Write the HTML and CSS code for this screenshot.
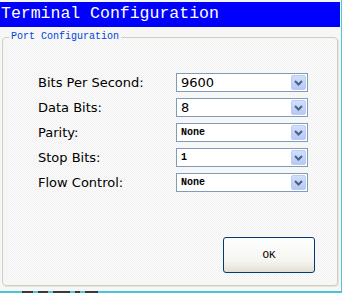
FILE: index.html
```html
<!DOCTYPE html>
<html lang="en">
<head>
  <meta charset="UTF-8" />
  <title>Terminal Configuration</title>
  <link rel="stylesheet" href="styles.css">
</head>
<body>
  <div class="window">
    <div class="titlebar">Terminal Configuration</div>

    <!-- Port settings -->
    <fieldset class="group">
      <legend>Port Configuration</legend>
      <div class="fields">
        <div class="row">
          <label>Bits Per Second:</label>
          <div class="combo"><span class="value num">9600</span><span class="drop"><svg width="9" height="6" viewBox="0 0 9 6"><path d="M1 1 L4.5 4.5 L8 1" fill="none" stroke="#4d6185" stroke-width="2"/></svg></span></div>
        </div>
        <div class="row">
          <label>Data Bits:</label>
          <div class="combo"><span class="value num">8</span><span class="drop"><svg width="9" height="6" viewBox="0 0 9 6"><path d="M1 1 L4.5 4.5 L8 1" fill="none" stroke="#4d6185" stroke-width="2"/></svg></span></div>
        </div>
        <div class="row">
          <label>Parity:</label>
          <div class="combo"><span class="value txt">None</span><span class="drop"><svg width="9" height="6" viewBox="0 0 9 6"><path d="M1 1 L4.5 4.5 L8 1" fill="none" stroke="#4d6185" stroke-width="2"/></svg></span></div>
        </div>
        <div class="row">
          <label>Stop Bits:</label>
          <div class="combo"><span class="value txt">1</span><span class="drop"><svg width="9" height="6" viewBox="0 0 9 6"><path d="M1 1 L4.5 4.5 L8 1" fill="none" stroke="#4d6185" stroke-width="2"/></svg></span></div>
        </div>
        <div class="row">
          <label>Flow Control:</label>
          <div class="combo"><span class="value txt">None</span><span class="drop"><svg width="9" height="6" viewBox="0 0 9 6"><path d="M1 1 L4.5 4.5 L8 1" fill="none" stroke="#4d6185" stroke-width="2"/></svg></span></div>
        </div>
      </div>
      <div class="actions">
        <button class="ok">OK</button>
      </div>
    </fieldset>
  </div>

  <!-- what shows of the window behind -->
  <div class="behind">
    <span style="width: 11px"></span>
    <span style="width: 10px"></span>
    <span style="width: 17px"></span>
    <span style="width: 5px"></span>
    <span style="width: 13px"></span>
  </div>
</body>
</html>
```

FILE: styles.css
```css
html, body {
  margin: 0;
  padding: 0;
  background: #4fc3da;
  height: 293px;
  overflow: hidden;
}
.window {
  width: 341px;
  height: 291px;
  box-sizing: border-box;
  padding-top: 2px;
  background-color: #f7f7f7;
  background-image: repeating-conic-gradient(#fbfbfb 0 25%, #f2f2f2 0 50%);
  background-size: 2px 2px;
}
.titlebar {
  width: 340px;
  height: 25px;
  box-sizing: border-box;
  padding: 0 0 0 1px;
  background: #0000ff;
  color: #fff;
  font-family: 'Liberation Mono', monospace;
  font-size: 16.5px;
  line-height: 23px;
  white-space: nowrap;
}
.group {
  margin: 4px 0 0 2px;
  width: 336px;
  box-sizing: border-box;
  border: 1px solid #d0d0bf;
  border-radius: 4px;
  box-shadow: 1px 1px 0 #e4e4da;
  padding: 30px 22px 12px 35px;
  min-width: 0;
}
.group legend {
  margin-left: -29px;
  padding: 0 2px;
  color: #0046d5;
  font-family: 'Liberation Mono', monospace;
  font-size: 10px;
  line-height: 12px;
}
.fields {
  display: flex;
  flex-direction: column;
  gap: 6px;
}
.row {
  display: flex;
  align-items: center;
  height: 19px;
}
.row label {
  width: 138px;
  font-family: 'DejaVu Sans', sans-serif;
  font-size: 13px;
  color: #000;
}
.combo {
  width: 132px;
  height: 19px;
  box-sizing: border-box;
  border: 1px solid #7f9db9;
  background: #fff;
  display: flex;
  align-items: center;
  justify-content: space-between;
}
.value {
  padding-left: 4px;
  color: #000;
}
.value.num {
  font-family: 'DejaVu Sans', sans-serif;
  font-size: 13px;
}
.value.txt {
  font-family: 'Liberation Mono', monospace;
  font-size: 10px;
  font-weight: bold;
}
.drop {
  width: 15px;
  height: 15px;
  margin-right: 1px;
  box-sizing: border-box;
  border: 1px solid #bccbf0;
  border-radius: 2px;
  background: linear-gradient(#d2defb, #b6c8f5);
  display: flex;
  align-items: center;
  justify-content: center;
}
.actions {
  display: flex;
  justify-content: flex-end;
  margin-top: 45px;
}
.ok {
  width: 92px;
  height: 36px;
  border: 1px solid #003c74;
  border-radius: 3px;
  background: linear-gradient(#ffffff, #f4f4f0 70%, #e2ded3);
  font-family: 'Liberation Mono', monospace;
  font-size: 11px;
  color: #000;
  padding: 0;
}
.behind {
  height: 2px;
  display: flex;
  gap: 5px;
  padding-left: 22px;
}
.behind span {
  background: #3a3a3a;
  height: 2px;
}
```
